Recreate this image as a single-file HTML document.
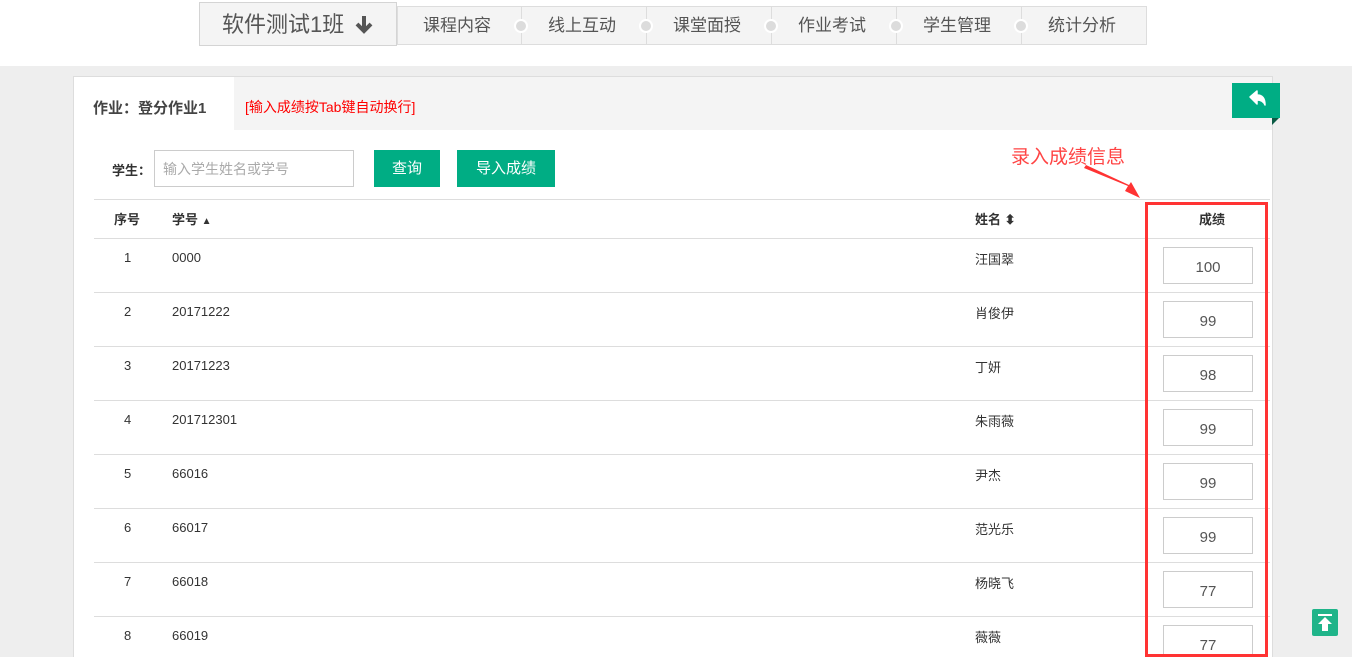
<!DOCTYPE html>
<html><head><meta charset="utf-8"><style>
*{margin:0;padding:0;box-sizing:border-box}
html,body{width:1352px;height:657px;overflow:hidden}
body{background:#fff;font-family:"Liberation Sans","Noto Sans CJK SC",sans-serif;position:relative;color:#333}
.abs{position:absolute}
.gray{left:0;top:66px;width:1352px;height:591px;background:#eeeeee}
.panel{left:73px;top:76px;width:1200px;height:600px;background:#fff;border:1px solid #ddd}
.tabs{left:397px;top:6px;width:750px;height:39px;background:#f4f4f4;border:1px solid #ddd}
.cls{left:199px;top:2px;width:198px;height:44px;background:#f4f4f4;border:1px solid #d4d4d4;font-size:22px;color:#555;line-height:44px;padding-left:22px}
.tab{top:6px;height:39px;line-height:39px;font-size:17px;color:#555}
.dot{width:14px;height:14px;border-radius:50%;background:#dcdcdc;border:2px solid #fff;top:19px}
.sep{width:1px;height:39px;background:#ddd;top:6px}
.row{left:94px;width:1176px;height:1px;background:#ddd}
.c{font-size:13px;color:#333}
.inp{width:90px;height:37px;border:1px solid #ccc;background:#fff;font-size:15px;color:#555;text-align:center;line-height:39px}
.btn{background:#00ad84;color:#fff;font-size:15px;text-align:center;line-height:37px;height:37px}
</style></head><body>
<div class="abs gray"></div>
<div class="abs tabs"></div>
<div class="abs cls">软件测试1班 <svg width="20" height="20" style="vertical-align:-2px;margin-left:4px"><path d="M10 2 V16 M3 10 L10 17 L17 10" stroke="#555" stroke-width="4" fill="none"/></svg></div>
<div class="abs tab" style="left:423px">课程内容</div>
<div class="abs tab" style="left:548px">线上互动</div>
<div class="abs tab" style="left:673px">课堂面授</div>
<div class="abs tab" style="left:798px">作业考试</div>
<div class="abs tab" style="left:923px">学生管理</div>
<div class="abs tab" style="left:1048px">统计分析</div>
<div class="abs sep" style="left:521px"></div><div class="abs dot" style="left:514px"></div>
<div class="abs sep" style="left:646px"></div><div class="abs dot" style="left:639px"></div>
<div class="abs sep" style="left:771px"></div><div class="abs dot" style="left:764px"></div>
<div class="abs sep" style="left:896px"></div><div class="abs dot" style="left:889px"></div>
<div class="abs sep" style="left:1021px"></div><div class="abs dot" style="left:1014px"></div>

<div class="abs panel"></div>
<div class="abs" style="left:234px;top:77px;width:1038px;height:53px;background:#f4f4f4"></div>
<div class="abs" style="left:93px;top:97px;font-size:15px;font-weight:bold;color:#444">作业：登分作业1</div>
<div class="abs" style="left:245px;top:97px;font-size:14px;color:#f00">[输入成绩按Tab键自动换行]</div>
<div class="abs" style="left:1232px;top:83px;width:48px;height:35px;background:#00ad84"><svg width="48" height="35"><path d="M18 14 L25 8 L25 12 Q33 12 33 22 Q31 17 25 17 L25 21 Z" fill="#fff" stroke="#fff" stroke-width="1.5" stroke-linejoin="round"/></svg></div>
<div class="abs" style="left:1272px;top:118px;width:0;height:0;border-top:7px solid #0b5a44;border-right:7px solid transparent"></div>

<div class="abs" style="left:112px;top:160px;font-size:13px;font-weight:bold">学生：</div>
<div class="abs" style="left:154px;top:150px;width:200px;height:37px;border:1px solid #ccc;font-size:14px;color:#aaa;line-height:37px;padding-left:8px">输入学生姓名或学号</div>
<div class="abs btn" style="left:374px;top:150px;width:66px">查询</div>
<div class="abs btn" style="left:457px;top:150px;width:98px">导入成绩</div>
<div class="abs" style="left:1011px;top:142px;font-size:19px;color:#f44">录入成绩信息</div>
<svg class="abs" style="left:1080px;top:160px" width="90" height="45"><polygon points="4,8 48,26 45,31 60,38 51,22 49,25 6,5" fill="#f33"/></svg>

<div class="row abs" style="top:199px"></div>
<div class="abs c" style="left:114px;top:209px;font-weight:bold">序号</div>
<div class="abs c" style="left:172px;top:209px;font-weight:bold">学号 <span style="font-size:10px">▲</span></div>
<div class="abs c" style="left:975px;top:209px;font-weight:bold">姓名 <span style="font-size:13px">⬍</span></div>
<div class="abs c" style="left:1199px;top:209px;font-weight:bold">成绩</div>

<div class="row abs" style="top:238px"></div>
<div class="abs c" style="left:124px;top:250px">1</div><div class="abs c" style="left:172px;top:250px">0000</div><div class="abs c" style="left:975px;top:249px">汪国翠</div><div class="abs inp" style="left:1163px;top:247px">100</div>
<div class="row abs" style="top:292px"></div>
<div class="abs c" style="left:124px;top:304px">2</div><div class="abs c" style="left:172px;top:304px">20171222</div><div class="abs c" style="left:975px;top:303px">肖俊伊</div><div class="abs inp" style="left:1163px;top:301px">99</div>
<div class="row abs" style="top:346px"></div>
<div class="abs c" style="left:124px;top:358px">3</div><div class="abs c" style="left:172px;top:358px">20171223</div><div class="abs c" style="left:975px;top:357px">丁妍</div><div class="abs inp" style="left:1163px;top:355px">98</div>
<div class="row abs" style="top:400px"></div>
<div class="abs c" style="left:124px;top:412px">4</div><div class="abs c" style="left:172px;top:412px">201712301</div><div class="abs c" style="left:975px;top:411px">朱雨薇</div><div class="abs inp" style="left:1163px;top:409px">99</div>
<div class="row abs" style="top:454px"></div>
<div class="abs c" style="left:124px;top:466px">5</div><div class="abs c" style="left:172px;top:466px">66016</div><div class="abs c" style="left:975px;top:465px">尹杰</div><div class="abs inp" style="left:1163px;top:463px">99</div>
<div class="row abs" style="top:508px"></div>
<div class="abs c" style="left:124px;top:520px">6</div><div class="abs c" style="left:172px;top:520px">66017</div><div class="abs c" style="left:975px;top:519px">范光乐</div><div class="abs inp" style="left:1163px;top:517px">99</div>
<div class="row abs" style="top:562px"></div>
<div class="abs c" style="left:124px;top:574px">7</div><div class="abs c" style="left:172px;top:574px">66018</div><div class="abs c" style="left:975px;top:573px">杨晓飞</div><div class="abs inp" style="left:1163px;top:571px">77</div>
<div class="row abs" style="top:616px"></div>
<div class="abs c" style="left:124px;top:628px">8</div><div class="abs c" style="left:172px;top:628px">66019</div><div class="abs c" style="left:975px;top:627px">薇薇</div><div class="abs inp" style="left:1163px;top:625px">77</div>

<div class="abs" style="left:1145px;top:202px;width:123px;height:455px;border:3px solid #f33"></div>

<div class="abs" style="left:1312px;top:609px;width:26px;height:27px;background:#1fb489;border-radius:2px">
<svg width="26" height="27"><rect x="6" y="5" width="14" height="2" fill="#fff"/><polygon points="13,8 20,15 16,15 16,22 10,22 10,15 6,15" fill="#fff"/></svg></div>
</body></html>
